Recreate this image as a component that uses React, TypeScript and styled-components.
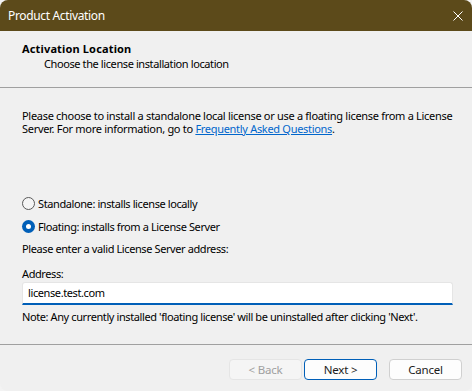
import { FC } from 'react';
import styled, { createGlobalStyle } from 'styled-components';

const GlobalStyle = createGlobalStyle`
  html, body {
    margin: 0;
    padding: 0;
    background: #f3f3f3;
  }
  body {
    font-family: 'Noto Sans', 'Open Sans', sans-serif;
    font-size: 11px;
    letter-spacing: -0.4px;
    color: #000;
  }
`;

const Window = styled.div`
  width: 472px;
  height: 391px;
  display: flex;
  flex-direction: column;
  background: #f0f0f0;
  border-radius: 8px;
  overflow: hidden;
  box-sizing: border-box;
`;

const TitleBar = styled.div`
  height: 31px;
  flex: none;
  display: flex;
  align-items: center;
  justify-content: space-between;
  padding: 0 9px 0 8px;
  background: #5c4a1a;
  color: #fff;
  font-size: 12px;
  letter-spacing: -0.35px;
`;

const CloseButton = styled.div`
  width: 10px;
  height: 10px;
  display: flex;
`;

const Header = styled.div`
  height: 57px;
  flex: none;
  padding: 10px 22px 0;
  box-sizing: border-box;
  border-bottom: 1px solid #a0a0a0;
`;

const HeaderTitle = styled.div`
  font-weight: 700;
  letter-spacing: 0.15px;
  line-height: 15px;
`;

const HeaderSubtitle = styled.div`
  padding-left: 22px;
  line-height: 15px;
`;

const Body = styled.div`
  flex: 1;
  display: flex;
  flex-direction: column;
  padding: 21px 16px 0 22px;
  border-bottom: 1px solid #a0a0a0;
`;

const Paragraph = styled.p`
  margin: 0;
  line-height: 13px;
  letter-spacing: -0.3px;
`;

const Link = styled.a`
  color: #0066cc;
  text-decoration: underline;
`;

const RadioGroup = styled.div`
  display: flex;
  flex-direction: column;
  gap: 10px;
  margin-top: 62px;
`;

const RadioRow = styled.label`
  display: flex;
  align-items: center;
  gap: 3px;
  line-height: 13px;
`;

const RadioCircle = styled.span<{ $checked?: boolean }>`
  width: 13px;
  height: 13px;
  box-sizing: border-box;
  border-radius: 50%;
  display: flex;
  align-items: center;
  justify-content: center;
  border: ${p => (p.$checked ? 'none' : '1px solid #595959')};
  background: ${p => (p.$checked ? '#005fb8' : '#f5f5f5')};
  &::after {
    content: '';
    display: ${p => (p.$checked ? 'block' : 'none')};
    width: 5px;
    height: 5px;
    border-radius: 50%;
    background: #fff;
  }
`;

const Hint = styled.div`
  margin-top: 9px;
  line-height: 13px;
`;

const FieldLabel = styled.div`
  margin-top: 12px;
  line-height: 13px;
`;

const AddressInput = styled.div`
  margin: 2px 3px 0 0;
  height: 23px;
  box-sizing: border-box;
  display: flex;
  align-items: center;
  padding: 0 5px 1px;
  background: #fff;
  border: 1px solid #e5e5e5;
  border-bottom: 2px solid #005fb8;
  border-radius: 3px 3px 0 0;
`;

const Note = styled.div`
  margin-top: 5px;
  line-height: 13px;
`;

const Footer = styled.div`
  height: 46px;
  flex: none;
  display: flex;
  align-items: flex-start;
  padding: 14px 10px 0 0;
  box-sizing: border-box;
  justify-content: flex-end;
`;

const Button = styled.button<{ $primary?: boolean }>`
  width: 73px;
  height: 21px;
  margin-left: ${p => (p.$primary ? '2px' : '12px')};
  padding: 0;
  font-family: inherit;
  font-size: 11.5px;
  letter-spacing: -0.2px;
  color: #1b1b1b;
  background: #fdfdfd;
  border: 1px solid ${p => (p.$primary ? '#005fb8' : '#d0d0d0')};
  border-radius: 4px;
  &:disabled {
    color: #a0a0a0;
    background: #f5f5f5;
    border-color: #e5e5e5;
    margin-left: 0;
  }
`;

const App: FC = () => {
  return (
    <Window>
      <GlobalStyle />
      <TitleBar>
        <span>Product Activation</span>
        <CloseButton>
          <svg width="10" height="10" viewBox="0 0 10 10">
            <path d="M0.5 0.5 L9.5 9.5 M9.5 0.5 L0.5 9.5" stroke="#fff" strokeWidth="1" />
          </svg>
        </CloseButton>
      </TitleBar>
      <Header>
        <HeaderTitle>Activation Location</HeaderTitle>
        <HeaderSubtitle>Choose the license installation location</HeaderSubtitle>
      </Header>
      <Body>
        <Paragraph>
          Please choose to install a standalone local license or use a floating license from a License
          Server. For more information, go to <Link href="#">Frequently Asked Questions</Link>.
        </Paragraph>
        <RadioGroup>
          <RadioRow>
            <RadioCircle />
            Standalone: installs license locally
          </RadioRow>
          <RadioRow>
            <RadioCircle $checked />
            Floating: installs from a License Server
          </RadioRow>
        </RadioGroup>
        <Hint>Please enter a valid License Server address:</Hint>
        <FieldLabel>Address:</FieldLabel>
        <AddressInput>license.test.com</AddressInput>
        <Note>Note: Any currently installed 'floating license' will be uninstalled after clicking 'Next'.</Note>
      </Body>
      <Footer>
        <Button disabled>&lt; Back</Button>
        <Button $primary>Next &gt;</Button>
        <Button>Cancel</Button>
      </Footer>
    </Window>
  );
};

export default App;
